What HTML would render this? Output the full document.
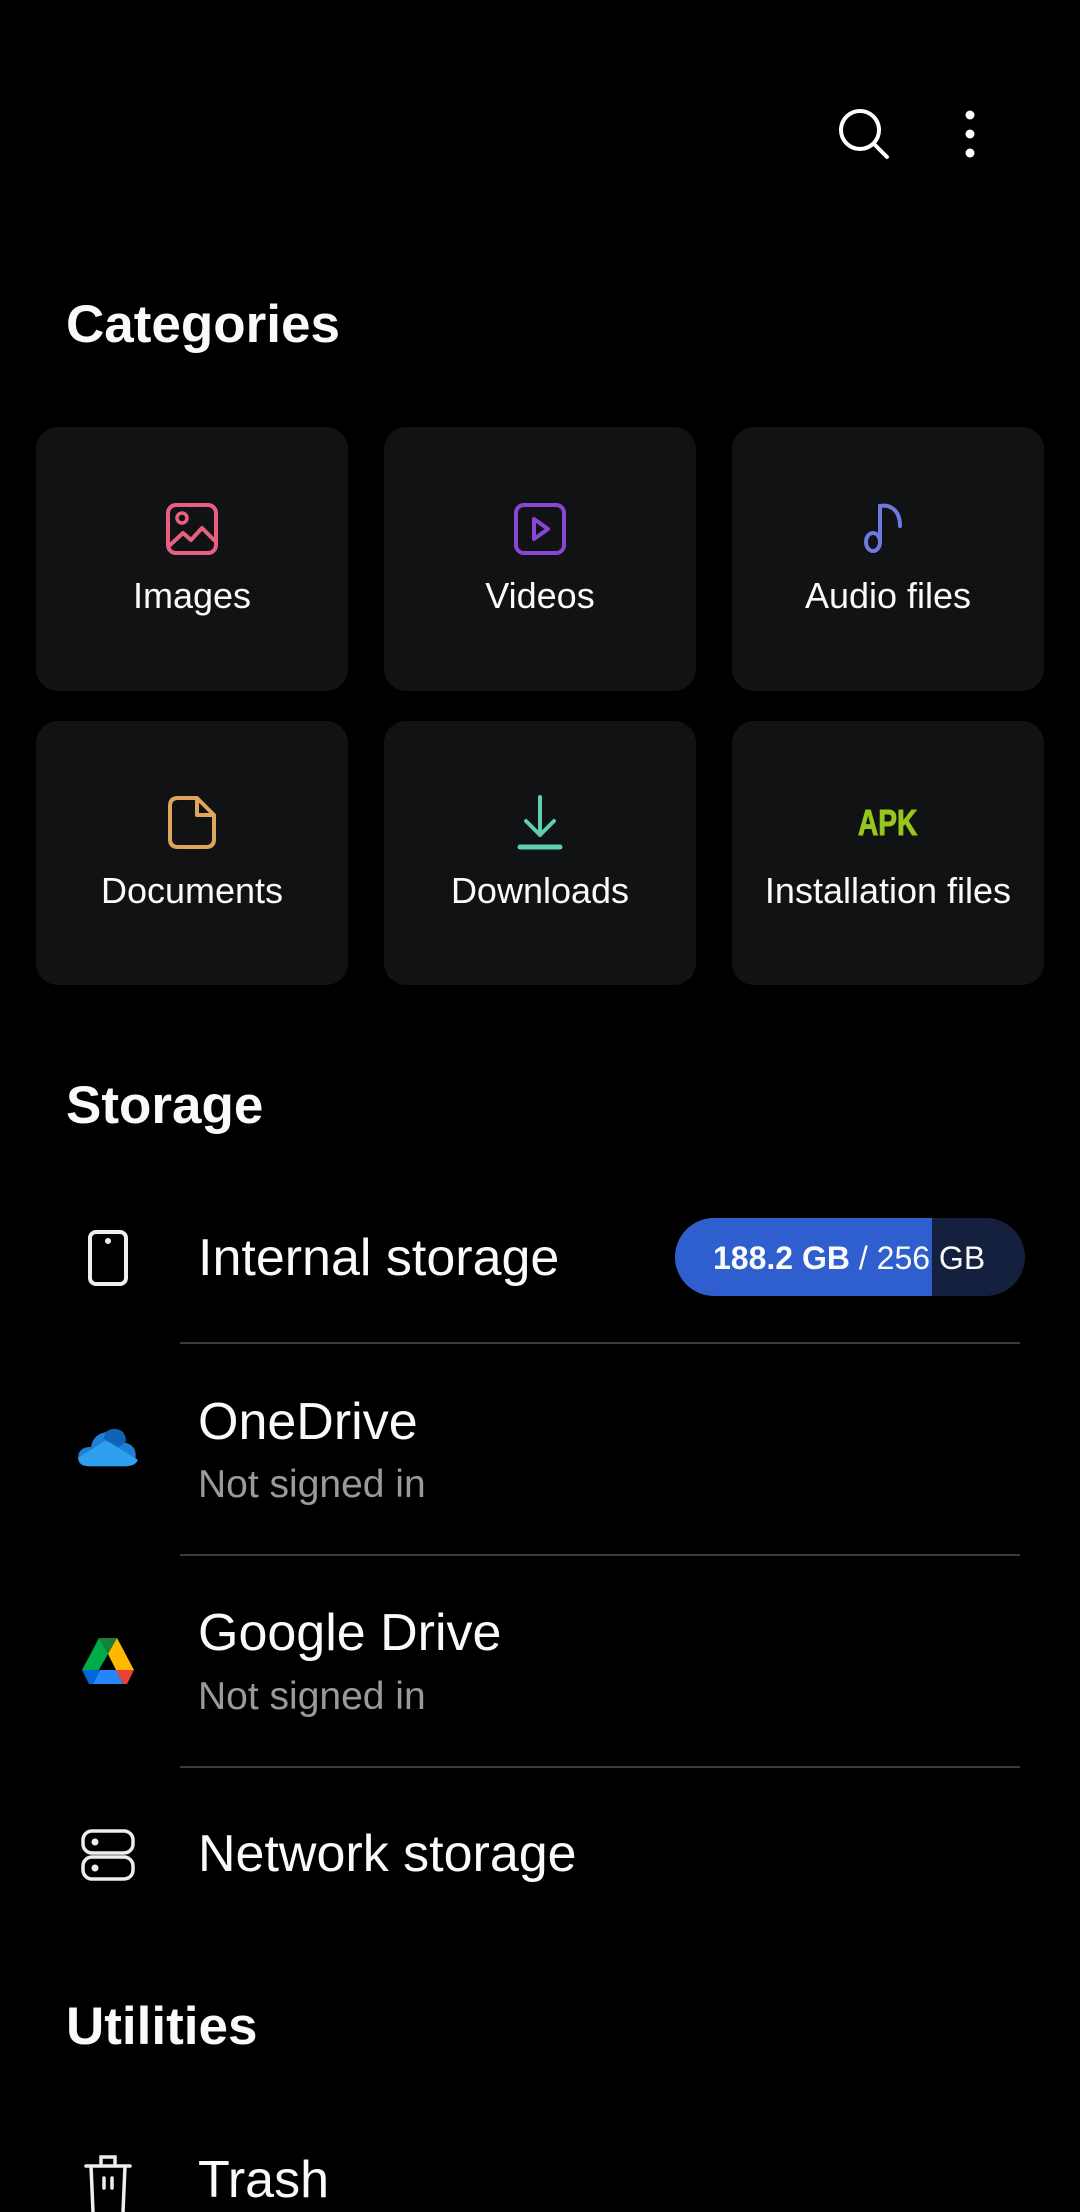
<!DOCTYPE html>
<html><head><meta charset="utf-8">
<style>
*{margin:0;padding:0;box-sizing:border-box}
html,body{width:1080px;height:2212px;background:#000;overflow:hidden}
body{position:relative;font-family:"Liberation Sans",sans-serif;color:#fafafa}
.t{position:absolute;line-height:1;white-space:nowrap}
.card{position:absolute;background:#111214;border-radius:22px;width:312px;height:264px}
.lbl{position:absolute;left:0;right:0;text-align:center;font-size:36px;line-height:1}
.div{position:absolute;left:180px;width:840px;height:2px;background:#3b3b3b}
svg{position:absolute}
</style></head><body>

<svg style="left:836px;top:106px" width="56" height="56" viewBox="0 0 56 56"><circle cx="24" cy="24" r="19" fill="none" stroke="#fff" stroke-width="4"/><path d="M38 38L51 51" stroke="#fff" stroke-width="4" stroke-linecap="round"/></svg>
<svg style="left:960px;top:106px" width="20" height="56" viewBox="0 0 20 56"><circle cx="10" cy="9" r="4.5" fill="#fff"/><circle cx="10" cy="28" r="4.5" fill="#fff"/><circle cx="10" cy="47" r="4.5" fill="#fff"/></svg>

<div class="t" style="left:66px;top:298px;font-size:53px;font-weight:bold">Categories</div>

<div class="card" style="left:36px;top:427px"><div class="lbl" style="top:151px">Images</div></div>
<div class="card" style="left:384px;top:427px"><div class="lbl" style="top:151px">Videos</div></div>
<div class="card" style="left:732px;top:427px"><div class="lbl" style="top:151px">Audio files</div></div>
<div class="card" style="left:36px;top:721px"><div class="lbl" style="top:152px">Documents</div></div>
<div class="card" style="left:384px;top:721px"><div class="lbl" style="top:152px">Downloads</div></div>
<div class="card" style="left:732px;top:721px"><div class="lbl" style="top:152px">Installation files</div></div>

<svg style="left:164px;top:501px" width="56" height="56" viewBox="0 0 56 56"><rect x="4" y="4" width="48" height="48" rx="8" fill="none" stroke="#e8607f" stroke-width="4"/><circle cx="18" cy="17" r="5" fill="none" stroke="#e8607f" stroke-width="3.5"/><path d="M5 45L19 32L27 39L38 27L51 40" fill="none" stroke="#e8607f" stroke-width="4" stroke-linejoin="round"/></svg>
<svg style="left:512px;top:501px" width="56" height="56" viewBox="0 0 56 56"><rect x="4" y="4" width="48" height="48" rx="8" fill="none" stroke="#8a45d6" stroke-width="4"/><path d="M22 18L36 28L22 38Z" fill="none" stroke="#8a45d6" stroke-width="4" stroke-linejoin="round"/></svg>
<svg style="left:862px;top:500px" width="48" height="56" viewBox="0 0 48 56"><ellipse cx="11" cy="42" rx="7" ry="9" fill="none" stroke="#6c7be0" stroke-width="4"/><path d="M18 42V6C28 4 38 10 38 26" fill="none" stroke="#6c7be0" stroke-width="4" stroke-linecap="round"/></svg>
<svg style="left:166px;top:795px" width="52" height="56" viewBox="0 0 52 56"><path d="M12 3H31L48 20V44Q48 52 40 52H12Q4 52 4 44V11Q4 3 12 3Z" fill="none" stroke="#e0a55c" stroke-width="4" stroke-linejoin="round"/><path d="M31 3V20H48" fill="none" stroke="#e0a55c" stroke-width="4" stroke-linejoin="round"/></svg>
<svg style="left:514px;top:793px" width="52" height="58" viewBox="0 0 52 58"><path d="M26 4V42M12 28L26 42L40 28" fill="none" stroke="#5fcdb0" stroke-width="4" stroke-linecap="round" stroke-linejoin="round"/><path d="M6 54H46" stroke="#5fcdb0" stroke-width="5" stroke-linecap="round"/></svg>
<div class="t" style="left:858px;top:805px;font-size:36px;font-weight:900;color:#97c61c;transform:scaleX(0.78);transform-origin:left;-webkit-text-stroke:1px #97c61c">APK</div>

<div class="t" style="left:66px;top:1079px;font-size:53px;font-weight:bold">Storage</div>

<svg style="left:86px;top:1229px" width="44" height="58" viewBox="0 0 44 58"><rect x="4" y="3" width="36" height="52" rx="6" fill="none" stroke="#eee" stroke-width="4"/><circle cx="22" cy="12" r="3" fill="#eee"/></svg>
<div class="t" style="left:198px;top:1232px;font-size:52px">Internal storage</div>
<div style="position:absolute;left:675px;top:1218px;width:350px;height:78px;border-radius:39px;background:#14203d;overflow:hidden"><div style="position:absolute;left:0;top:0;width:257px;height:78px;background:#2f5fce"></div></div>
<div class="t" style="left:713px;top:1242px;font-size:32px"><b>188.2 GB</b> / 256 GB</div>
<div class="div" style="top:1342px"></div>

<svg style="left:76px;top:1422px" width="64" height="50" viewBox="0 0 60 44"><path d="M14 22Q16 10 28 8Q36 2 44 8Q48 14 46 18Q56 20 56 30Q56 40 46 40H12Q2 40 2 32Q2 22 14 22Z" fill="#1f7fd4"/><path d="M2 32L28 16L58 34Q56 40 46 40H12Q3 40 2 32Z" fill="#2ea0ee"/><path d="M28 8Q36 2 44 8Q48 14 46 18L40 22L26 14Z" fill="#0d63b5"/></svg>
<div class="t" style="left:198px;top:1396px;font-size:52px">OneDrive</div>
<div class="t" style="left:198px;top:1465px;font-size:39px;color:#9a9a9a">Not signed in</div>
<div class="div" style="top:1554px"></div>

<svg style="left:80px;top:1636px" width="56" height="50" viewBox="0 0 56 50"><path d="M19 2H37L28 18Z" fill="#188038"/><path d="M19 2L28 18L13 44L2 34Z" fill="#00ac47"/><path d="M37 2L54 34H36L28 18Z" fill="#ffba00"/><path d="M2 34H20L13 48H9Z" fill="#0066da"/><path d="M20 34H36L43 48H13Z" fill="#2684fc"/><path d="M36 34H54L47 48H43Z" fill="#ea4335"/></svg>
<div class="t" style="left:198px;top:1607px;font-size:52px">Google Drive</div>
<div class="t" style="left:198px;top:1677px;font-size:39px;color:#9a9a9a">Not signed in</div>
<div class="div" style="top:1766px"></div>

<svg style="left:80px;top:1828px" width="56" height="54" viewBox="0 0 56 54"><rect x="3" y="3" width="50" height="22" rx="9" fill="none" stroke="#eee" stroke-width="3.5"/><rect x="3" y="29" width="50" height="22" rx="9" fill="none" stroke="#eee" stroke-width="3.5"/><circle cx="15" cy="14" r="3.5" fill="#eee"/><circle cx="15" cy="40" r="3.5" fill="#eee"/></svg>
<div class="t" style="left:198px;top:1828px;font-size:52px">Network storage</div>

<div class="t" style="left:66px;top:2000px;font-size:53px;font-weight:bold">Utilities</div>

<svg style="left:82px;top:2152px" width="52" height="60" viewBox="0 0 52 60"><path d="M4 14H48" stroke="#eee" stroke-width="3.5" stroke-linecap="round"/><path d="M19 14V5H33V14" fill="none" stroke="#eee" stroke-width="3.5"/><path d="M9 14L11 60M43 14L41 60" stroke="#eee" stroke-width="3.5"/><path d="M22 26V36M30 26V36" stroke="#eee" stroke-width="3.5" stroke-linecap="round"/></svg>
<div class="t" style="left:198px;top:2154px;font-size:52px">Trash</div>

</body></html>
